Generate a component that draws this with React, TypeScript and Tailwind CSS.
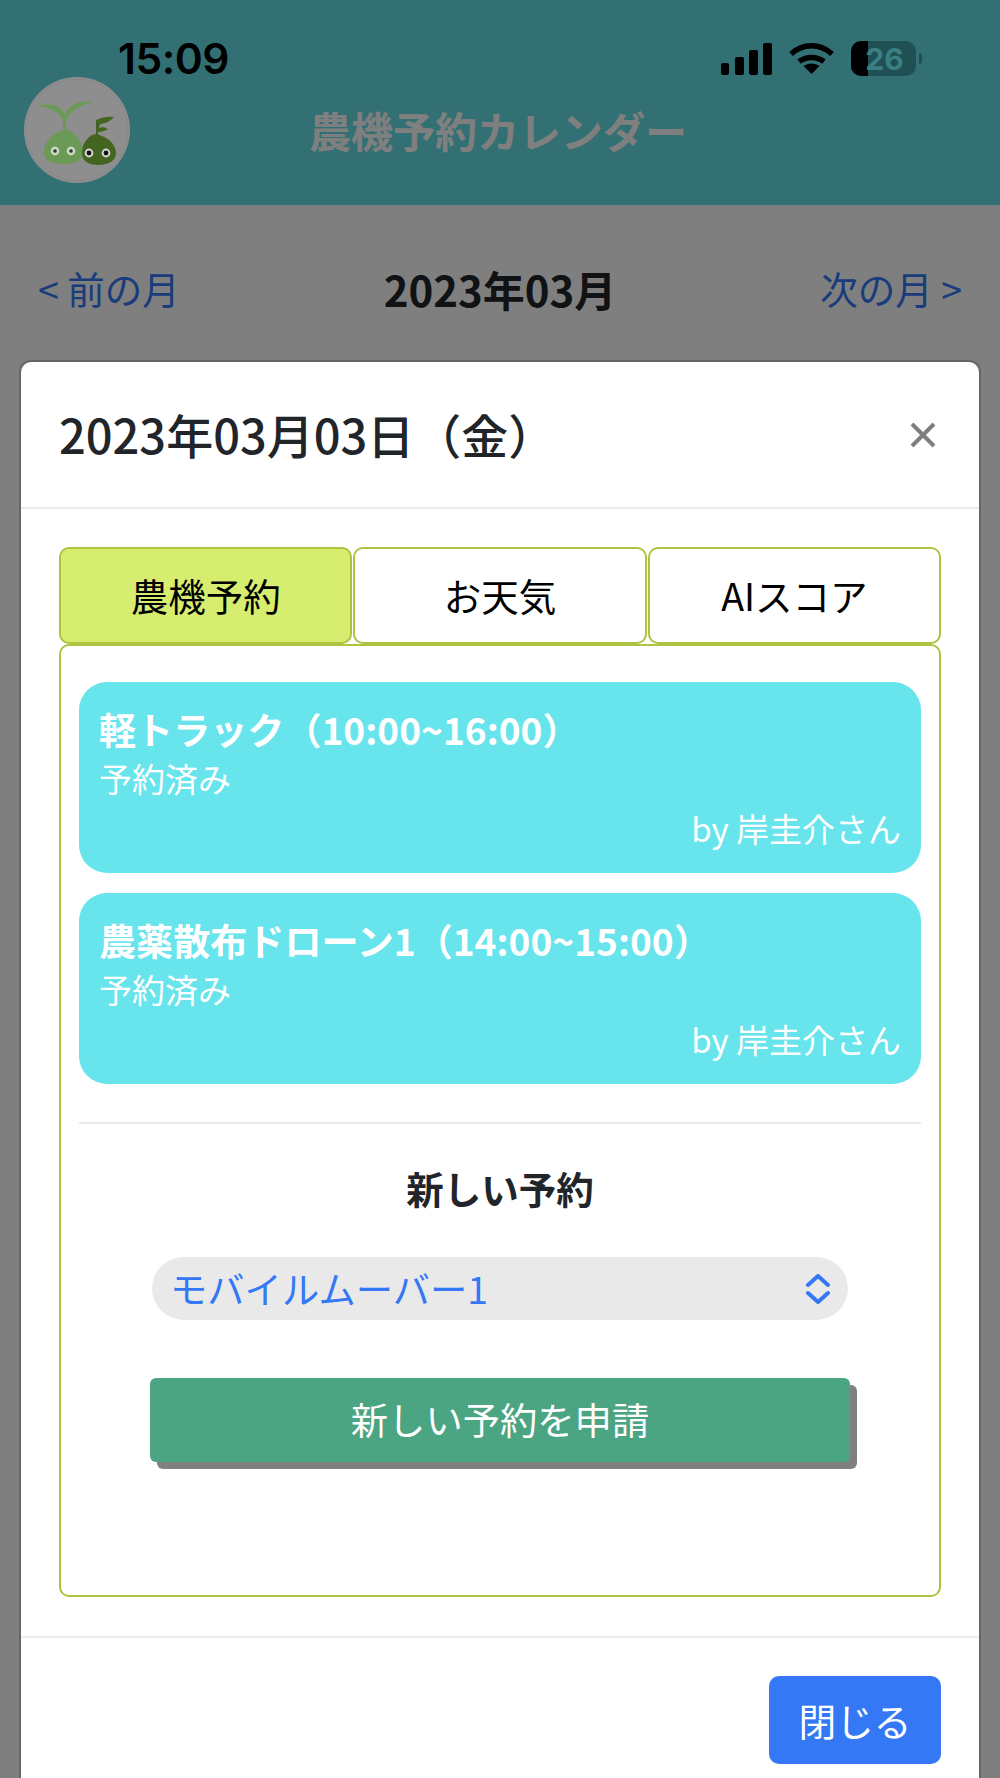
import React from "react";

const font = { fontFamily: '"Noto Sans CJK JP", "Noto Sans", sans-serif' };

function Logo() {
  return (
    <svg viewBox="0 0 106 106" className="w-[106px] h-[106px]">
      <circle cx="53" cy="53" r="53" fill="#8e8e8e" />
      <circle cx="53" cy="53" r="51" fill="none" stroke="#868686" strokeWidth="0.8" />
      <path d="M14 29 C28 25 38 30 41 38 C44 28 54 23 69 25 C56 28 45 34 42 44 L42 52 C54 56 59 68 59 76 C59 84 50 87 39 87 C28 87 20 84 20 75 C20 66 27 57 39 53 L39 46 C38 36 28 31 14 29 Z" fill="#6a9a55" />
      <path d="M72 43 C78 40 85 39 90 40 C87 43 84 46 76 47 L75 51 C78 50 81 50 84 52 C81 54 78 55 74 55 L74 58 L72 58 Z" fill="#43651f" />
      <path d="M71 57 C84 59 92 68 92 76 C92 84 84 88 74 88 C64 88 58 84 58 76 C58 68 62 60 71 57 Z" fill="#43651f" />
      <circle cx="31" cy="74" r="4.400" fill="#c9d6c0" /><circle cx="31" cy="74" r="1.800" fill="#1f3d1f" />
      <circle cx="47" cy="74" r="4.400" fill="#c9d6c0" /><circle cx="47" cy="74" r="1.800" fill="#1f3d1f" />
      <circle cx="65" cy="76" r="4.400" fill="#d5d5d5" /><circle cx="65" cy="76" r="2.400" fill="#111" />
      <circle cx="82" cy="76" r="4.400" fill="#d5d5d5" /><circle cx="82" cy="76" r="2.400" fill="#111" />
    </svg>
  );
}

function StatusBar() {
  return (
    <div className="absolute top-0 left-0 right-0 z-20 h-[80px] flex items-start justify-between pl-[118px] pr-[78px] pt-[36px] text-black">
      <span className="text-[42.500px] leading-[46px] font-semibold tracking-[-0.5px]" style={{ fontFamily: "Inter, sans-serif" }}>15:09</span>
      <div className="flex items-center gap-[17px] mt-[5px]">
        <svg width="51" height="32" viewBox="0 0 51 32" fill="#000">
          <rect x="0" y="20" width="8" height="12" rx="2" />
          <rect x="14" y="14" width="9" height="18" rx="2" />
          <rect x="28" y="7" width="9" height="25" rx="2" />
          <rect x="42" y="0" width="9" height="32" rx="2" />
        </svg>
        <svg width="45" height="32" viewBox="0 0 45 32" fill="none" stroke="#000">
          <path d="M2 11 C14 0 31 0 43 11" strokeWidth="5.5" />
          <path d="M10 18.500 C17 13 28 13 35 18.500" strokeWidth="5.5" />
          <path d="M22.500 31 L14.500 23 C19 19.500 26 19.500 30.500 23 Z" fill="#000" stroke="none" />
        </svg>
        <div className="flex items-center">
          <div className="relative w-[65px] h-[35px] rounded-[10px] bg-[#1f5053] overflow-hidden flex items-center justify-center">
            <div className="absolute left-0 top-0 bottom-0 w-[17px] bg-black" />
            <span className="relative text-[30px] leading-none font-bold text-[#3a7f85] pl-[2px]" style={{ fontFamily: "Inter, sans-serif" }}>26</span>
          </div>
          <div className="w-[3px] h-[11px] ml-[3px] rounded-r-full bg-[#1f5053]" />
        </div>
      </div>
    </div>
  );
}

function Reservation({ title }: { title: string }) {
  return (
    <div className="h-[191px] rounded-[28px] bg-[#67e4ec] text-white px-[20px] pt-[22px]">
      <div className="text-[37.100px] leading-[50px] font-bold">{title}</div>
      <div className="text-[33px] leading-[49px]">予約済み</div>
      <div className="text-[33px] leading-[49px] text-right mt-[1px]">by 岸圭介さん</div>
    </div>
  );
}

const tabBase = "flex-1 h-[97px] rounded-[10px] border-2 border-[#aec33f] flex items-center justify-center text-[37.500px] text-black";

export default function App() {
  return (
    <div className="relative w-[1000px] h-[1778px] overflow-hidden bg-white" style={font}>
      <header className="h-[205px] bg-[#66e0e8] flex items-center justify-center">
        <h1 className="text-[42px] font-bold text-white mt-[54px] ml-[-4px]">農機予約カレンダー</h1>
      </header>
      <nav className="flex items-center justify-between pl-[38px] pr-[38px] h-[166px] text-[37.500px]">
        <span className="text-[#3478f6]">&lt; 前の月</span>
        <span className="font-bold text-[#212529] text-[42px]">2023年03月</span>
        <span className="text-[#3478f6]">次の月 &gt;</span>
      </nav>

      <div className="absolute inset-0 z-10 bg-black/50">
        <div className="absolute left-[19px] top-[360px] w-[962px] bg-white rounded-t-[12px] border-2 border-b-0 border-[#666666]">
          <div className="h-[147px] flex items-center justify-between pl-[38px] pr-[43px] border-b-2 border-[#e9ecef]">
            <span className="text-[47px] font-medium text-[#212529]">2023年03月03日（金）</span>
            <svg width="26" height="26" viewBox="0 0 26 26" stroke="#7f7f7f" strokeWidth="4">
              <path d="M2 2 L24 24 M24 2 L2 24" />
            </svg>
          </div>
          <div className="px-[38px] pt-[38px] h-[1127px]">
            <div className="flex gap-[1px]">
              <div className={`${tabBase} bg-[#d6ed70]`}>農機予約</div>
              <div className={tabBase}>お天気</div>
              <div className={tabBase}>AIスコア</div>
            </div>
            <div className="h-[953px] rounded-[10px] border-2 border-[#aec33f] px-[18px] pt-[36px]">
              <div className="flex flex-col gap-[20px]">
                <Reservation title="軽トラック（10:00~16:00）" />
                <Reservation title="農薬散布ドローン1（14:00~15:00）" />
              </div>
              <div className="h-[2px] bg-[#e9e9e9] mt-[38px]" />
              <div className="text-center text-[37.500px] font-bold text-[#212529] mt-[38px] leading-[52px]">新しい予約</div>
              <div className="mx-[73px] mt-[43px] h-[63px] rounded-[32px] bg-[#e9e9e9] flex items-center justify-between pl-[18px] pr-[17px] text-[#3478f6] text-[37.300px]">
                <span>モバイルムーバー1</span>
                <svg width="26" height="30" viewBox="0 0 26 30" fill="none" stroke="#3478f6" strokeWidth="4" strokeLinecap="round" strokeLinejoin="round">
                  <path d="M3 11 L13 2 L23 11 M3 19 L13 28 L23 19" />
                </svg>
              </div>
              <div className="mx-[71px] mt-[58px] h-[84px] rounded-[6px] bg-[#4ba582] shadow-[7px_7px_0_0_#808080] flex items-center justify-center text-white text-[37.300px]">新しい予約を申請</div>
            </div>
          </div>
          <div className="h-[146px] border-t-2 border-[#e9ecef] flex justify-end pt-[38px] pr-[38px]">
            <div className="w-[172px] h-[88px] rounded-[10px] bg-[#3478f6] text-white text-[37.700px] flex items-center justify-center">閉じる</div>
          </div>
        </div>
      </div>
      <div className="absolute left-[24px] top-[77px] z-20"><Logo /></div>
      <StatusBar />
    </div>
  );
}
